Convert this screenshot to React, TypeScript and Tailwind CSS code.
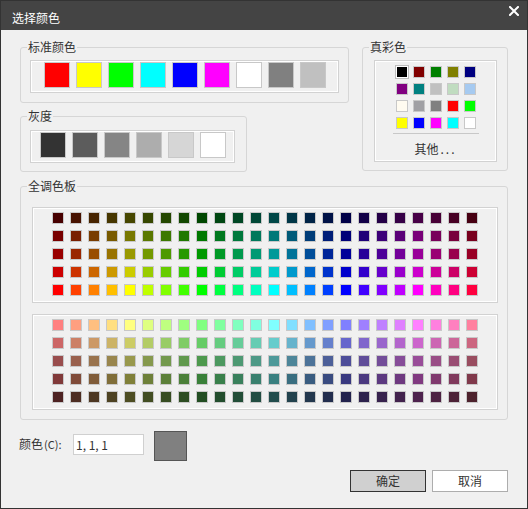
import React from "react";

function hsv(h: number, s: number, v: number) {
  const c = v * s;
  const x = c * (1 - Math.abs(((h / 60) % 2) - 1));
  const m = v - c;
  let r = 0, g = 0, b = 0;
  if (h < 60) { r = c; g = x; }
  else if (h < 120) { r = x; g = c; }
  else if (h < 180) { g = c; b = x; }
  else if (h < 240) { g = x; b = c; }
  else if (h < 300) { r = x; b = c; }
  else { r = c; b = x; }
  const to = (n: number) => Math.round((n + m) * 255);
  return `rgb(${to(r)},${to(g)},${to(b)})`;
}

const standard = ["#ff0000", "#ffff00", "#00ff00", "#00ffff", "#0000ff", "#ff00ff", "#ffffff", "#808080", "#c0c0c0"];
const greys = ["#333333", "#5c5c5c", "#858585", "#adadad", "#d6d6d6", "#ffffff"];
const trueColors = [
  "#000000", "#800000", "#008000", "#808000", "#000080",
  "#800080", "#008080", "#c0c0c0", "#c0dcc0", "#a6caf0",
  "#fffbf0", "#a0a0a4", "#808080", "#ff0000", "#00ff00",
  "#ffff00", "#0000ff", "#ff00ff", "#00ffff", "#ffffff",
];
const topRows: [number, number][] = [[1, 0.28], [1, 0.47], [1, 0.6], [1, 0.8], [1, 1]];
const bottomRows: [number, number][] = [[0.5, 1], [0.5, 0.8], [0.5, 0.6], [0.55, 0.5], [0.55, 0.3]];

function Panel({ className, inner, children }: { className: string; inner: string; children: React.ReactNode }) {
  return (
    <div className={`border border-[#d2d2d2] ${className}`}>
      <div className={`h-full border border-white ${inner}`}>{children}</div>
    </div>
  );
}

function Legend({ children }: { children: React.ReactNode }) {
  return <legend className="ml-[6px] px-[1px] text-[12px] leading-[14px] text-[#333]">{children}</legend>;
}

function HuePanel({ rows }: { rows: [number, number][] }) {
  return (
    <Panel className="h-[96px] w-[466px]" inner="flex flex-col items-center pt-[3px] gap-[6px]">
      {rows.map(([s, v], ri) => (
        <div key={ri} className="flex gap-[6px]">
          {Array.from({ length: 24 }).map((_, i) => (
            <div
              key={i}
              className="h-[12px] w-[12px] border border-[#c8c8c8]"
              style={{ backgroundColor: hsv(i * 15, s, v) }}
            />
          ))}
        </div>
      ))}
    </Panel>
  );
}

export default function App() {
  return (
    <div className="h-[509px] w-[528px] overflow-hidden border border-[#333] bg-[#f0f0f0] font-['Noto_Sans_CJK_SC','Noto_Sans',sans-serif] text-[12px] text-[#333]">
      {/* Title bar */}
      <div className="flex h-[29px] items-start justify-between bg-[#444] pl-[11px] pr-[8px]">
        <div className="pt-[10px] text-[12px] leading-[14px] text-white">选择颜色</div>
        <svg className="mt-[5px]" width="10" height="10" viewBox="0 0 10 10">
          <path d="M1 1 L9 9 M9 1 L1 9" stroke="#fff" strokeWidth="2" strokeLinecap="square" />
        </svg>
      </div>

      {/* Body */}
      <div className="px-[19px] pt-[10px]">
        <div className="flex items-start gap-[13px]">
          <div className="flex flex-col items-start gap-[6px]">
            <fieldset className="w-[329px] rounded-[3px] border border-[#d6d6d6] pt-[6px] pb-[9px]">
              <Legend>标准颜色</Legend>
              <div className="pl-[9px]">
                <Panel className="h-[33px] w-[309px]" inner="flex justify-center gap-[6px] pb-[3px]">
                  {standard.map((c, i) => (
                    <div key={i} className="h-[26px] w-[26px] border border-[#c8c8c8]" style={{ backgroundColor: c }} />
                  ))}
                </Panel>
              </div>
            </fieldset>
            <fieldset className="w-[227px] rounded-[3px] border border-[#d6d6d6] pt-[7px] pb-[8px]">
              <Legend>灰度</Legend>
              <div className="pl-[9px]">
                <Panel className="h-[33px] w-[205px]" inner="flex justify-center gap-[6px] pb-[3px]">
                  {greys.map((c, i) => (
                    <div key={i} className="h-[26px] w-[26px] border border-[#c8c8c8]" style={{ backgroundColor: c }} />
                  ))}
                </Panel>
              </div>
            </fieldset>
          </div>

          <fieldset className="w-[146px] rounded-[3px] border border-[#d6d6d6] pt-[6px] pb-[8px]">
            <Legend>真彩色</Legend>
            <div className="pl-[11px]">
              <Panel className="h-[102px] w-[123px]" inner="flex flex-col items-center pt-[4px]">
                <div className="grid grid-cols-5 gap-[5px]">
                  {trueColors.map((c, i) =>
                    i === 0 ? (
                      <div
                        key={i}
                        className="h-[12px] w-[12px] border border-white outline outline-1 outline-[#bdbdbd]"
                        style={{ backgroundColor: c }}
                      />
                    ) : (
                      <div key={i} className="h-[12px] w-[12px] border border-[#c8c8c8]" style={{ backgroundColor: c }} />
                    )
                  )}
                </div>
                <div className="mt-[4px] h-px w-[86px] bg-[#c8c8c8]" />
                <div className="mt-[8px] text-[12px] leading-[14px] text-[#333]">
                  其他<span className="ml-[2px] tracking-[2px]">...</span>
                </div>
              </Panel>
            </div>
          </fieldset>
        </div>

        <fieldset className="mt-[7px] w-[488px] rounded-[3px] border border-[#d6d6d6] pt-[14px] pb-[9px]">
          <Legend>全调色板</Legend>
          <div className="flex flex-col gap-[11px] pl-[11px]">
            <HuePanel rows={topRows} />
            <HuePanel rows={bottomRows} />
          </div>
        </fieldset>

        <div className="mt-[11px] flex items-start">
          <div className="-ml-[1px] mt-[3px] w-[54px] text-[12px] leading-[20px] text-[#333]">
            颜色<span className="ml-[1px] text-[11px]">(C):</span>
          </div>
          <div className="mt-[3px] flex h-[21px] w-[71px] items-center border border-[#d0d0d0] bg-white pl-[2px] text-[12px] text-[#333]">
            1, 1, 1
          </div>
          <div className="ml-[10px] h-[30px] w-[33px] border border-[#555] bg-[#808080]" />
        </div>

        <div className="mt-[9px] flex justify-end gap-[6px]">
          <button className="flex h-[22px] w-[76px] items-center justify-center border border-[#333] bg-[#d0d0d0] text-[12px] text-[#333]">
            确定
          </button>
          <button className="flex h-[22px] w-[76px] items-center justify-center border border-[#adadad] bg-white text-[12px] text-[#333]">
            取消
          </button>
        </div>
      </div>
    </div>
  );
}
